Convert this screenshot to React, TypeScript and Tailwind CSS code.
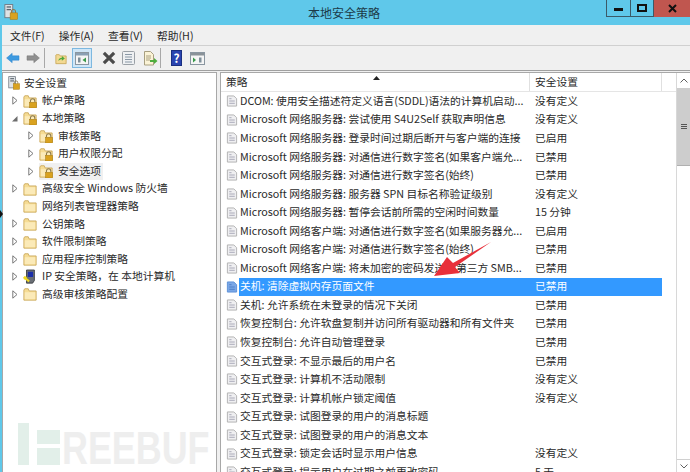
import React from "react";

const font = { fontFamily: '"Noto Sans CJK SC", "Noto Sans", sans-serif' };

const Folder = ({ lock = false }: { lock?: boolean }) => (
  <svg width="14" height="14" viewBox="0 0 16 16" className="shrink-0">
    <path d="M1 3.5 V15 H15 V4.5 H7 L6 2 H2 Z" fill="#f6dc94" stroke="#c9a85a" />
    <rect x="2" y="6" width="12" height="8" fill="#fbeab8" />
    {lock && (
      <g>
        <path d="M8.5 9.5 V8 a2.5 2.5 0 0 1 5 0 V9.5" fill="none" stroke="#8a7a50" strokeWidth="1.2" />
        <rect x="7.5" y="9.5" width="8" height="6.5" fill="#d9a21f" stroke="#a67a12" strokeWidth="0.6" />
      </g>
    )}
  </svg>
);

const ServerLock = ({ w = 12, h = 14 }: { w?: number; h?: number }) => (
  <svg width={w} height={h} viewBox="0 0 16 18" className="shrink-0">
    <rect x="1" y="0.5" width="9" height="15" fill="#dfe3e6" stroke="#6f7780" />
    <rect x="3" y="2.5" width="5" height="1.5" fill="#5c6670" />
    <rect x="3" y="5.5" width="5" height="1.5" fill="#5c6670" />
    <path d="M8.5 10 V8.5 a2.3 2.3 0 0 1 4.6 0 V10" fill="none" stroke="#8a7a50" strokeWidth="1.2" />
    <rect x="7" y="10" width="8.5" height="7.5" fill="#d9a21f" stroke="#a67a12" strokeWidth="0.6" />
  </svg>
);

const IpIcon = () => (
  <svg width="14" height="16" viewBox="0 0 16 18" className="shrink-0">
    <path d="M4 1 H13 V13 L11 16 H4 Z" fill="#6a6f76" stroke="#3a3d42" />
    <rect x="5.5" y="3" width="6" height="6" fill="#1c2fa8" />
    <path d="M1 9 L7 14" stroke="#f0d820" strokeWidth="2.4" />
    <circle cx="2.5" cy="10" r="2" fill="#f0d820" />
  </svg>
);

const Caret = ({ open = false, hidden = false }: { open?: boolean; hidden?: boolean }) => (
  <span className="flex w-[9px] shrink-0 items-center justify-center">
    {hidden ? null : open ? (
      <svg width="7" height="7" viewBox="0 0 7 7"><path d="M6.5 1 V6.5 H1 Z" fill="#6d6d6d" /></svg>
    ) : (
      <svg width="6" height="9" viewBox="0 0 6 9"><path d="M0.8 0.8 L5 4.5 L0.8 8.2 Z" fill="#fff" stroke="#7a7a7a" /></svg>
    )}
  </span>
);

type T = { t: string; d: number; k: "f" | "l" | "s" | "i"; c?: "o" | "n"; sel?: boolean };
const tree: T[] = [
  { t: "帐户策略", d: 1, k: "l" },
  { t: "本地策略", d: 1, k: "l", c: "o" },
  { t: "审核策略", d: 2, k: "l" },
  { t: "用户权限分配", d: 2, k: "l" },
  { t: "安全选项", d: 2, k: "l", sel: true },
  { t: "高级安全 Windows 防火墙", d: 1, k: "f" },
  { t: "网络列表管理器策略", d: 1, k: "f", c: "n" },
  { t: "公钥策略", d: 1, k: "f" },
  { t: "软件限制策略", d: 1, k: "f" },
  { t: "应用程序控制策略", d: 1, k: "f" },
  { t: "IP 安全策略，在 本地计算机", d: 1, k: "i" },
  { t: "高级审核策略配置", d: 1, k: "f" },
];

const rows: [string, string][] = [
  ["DCOM: 使用安全描述符定义语言(SDDL)语法的计算机启动...", "没有定义"],
  ["Microsoft 网络服务器: 尝试使用 S4U2Self 获取声明信息", "没有定义"],
  ["Microsoft 网络服务器: 登录时间过期后断开与客户端的连接", "已启用"],
  ["Microsoft 网络服务器: 对通信进行数字签名(如果客户端允...", "已禁用"],
  ["Microsoft 网络服务器: 对通信进行数字签名(始终)", "已禁用"],
  ["Microsoft 网络服务器: 服务器 SPN 目标名称验证级别", "没有定义"],
  ["Microsoft 网络服务器: 暂停会话前所需的空闲时间数量", "15 分钟"],
  ["Microsoft 网络客户端: 对通信进行数字签名(如果服务器允...", "已启用"],
  ["Microsoft 网络客户端: 对通信进行数字签名(始终)", "已禁用"],
  ["Microsoft 网络客户端: 将未加密的密码发送到第三方 SMB...", "已禁用"],
  ["关机: 清除虚拟内存页面文件", "已禁用"],
  ["关机: 允许系统在未登录的情况下关闭", "已禁用"],
  ["恢复控制台: 允许软盘复制并访问所有驱动器和所有文件夹", "已禁用"],
  ["恢复控制台: 允许自动管理登录", "已禁用"],
  ["交互式登录: 不显示最后的用户名", "已禁用"],
  ["交互式登录: 计算机不活动限制", "没有定义"],
  ["交互式登录: 计算机帐户锁定阈值", "没有定义"],
  ["交互式登录: 试图登录的用户的消息标题", ""],
  ["交互式登录: 试图登录的用户的消息文本", ""],
  ["交互式登录: 锁定会话时显示用户信息", "没有定义"],
  ["交互式登录: 提示用户在过期之前更改密码", "5 天"],
];

const PolicyIcon = ({ sel }: { sel: boolean }) => (
  <svg width="12" height="14" viewBox="0 0 13 14" className="shrink-0">
    <path d="M1.5 1.5 H8.5 L11.5 4.5 V12.5 H1.5 Z" fill={sel ? "#7aa7e6" : "#efeff1"} stroke={sel ? "#5b8fd8" : "#b0b0b0"} />
    <path d="M3.5 4.5 H6 M3.5 7 H9.5 M3.5 9.5 H9.5" stroke={sel ? "#4a7cc6" : "#a5a5b5"} />
  </svg>
);

function Toolbar() {
  return (
    <div className="flex h-[24px] shrink-0 items-center bg-[#f0f0f0] pl-[4px]">
      <svg width="14" height="12" viewBox="0 0 16 14"><path d="M0.5 7 L7 1.5 V4.5 H15 V9.5 H7 V12.5 Z" fill="#3d9ae0" stroke="#2f86cc" strokeWidth="0.6" /></svg>
      <svg width="14" height="12" viewBox="0 0 16 14" className="ml-[6px]"><path d="M15.5 7 L9 1.5 V4.5 H1 V9.5 H9 V12.5 Z" fill="#8f8f8f" stroke="#777" strokeWidth="0.6" /></svg>
      <div className="ml-[4px] h-[20px] w-px bg-[#a8a8a8]" />
      <svg width="12" height="13" viewBox="0 0 14 14" className="ml-[10px]"><path d="M1 3 V13 H13 V4 H6 L5 2.5 H1.5 Z" fill="#f3d992" stroke="#c9a85a" /><path d="M4 10 C4 7 6 6 8 6 V4 L11.5 7 L8 9.5 V8 C6.5 8 5 8.5 4 10 Z" fill="#4fa83d" /></svg>
      <div className="ml-[5px] flex h-[20px] w-[20px] items-center justify-center border border-[#7db8e0] bg-[#cfe6f7]">
        <svg width="14" height="13" viewBox="0 0 14 13"><rect x="0.5" y="0.5" width="13" height="12" fill="#f5f5f5" stroke="#8a96a0" /><rect x="1" y="1" width="12" height="2.5" fill="#8aa0b4" /><rect x="3" y="5.5" width="2.5" height="5" fill="#7f8f9a" /><path d="M11 5.5 V10.5 L7.5 8 Z" fill="#3a9a4a" /></svg>
      </div>
      <svg width="14" height="14" viewBox="0 0 15 14" className="ml-[10px]"><path d="M2 1.5 L13 12.5 M13 1.5 L2 12.5" stroke="#4b4b4b" strokeWidth="3.4" /></svg>
      <svg width="13" height="14" viewBox="0 0 13 14" className="ml-[6px]"><rect x="0.5" y="0.5" width="12" height="13" rx="1" fill="#eef0f2" stroke="#9aa0a6" /><path d="M3 3.5 H10 M3 6 H10 M3 8.5 H10 M3 11 H10" stroke="#8a98a6" /></svg>
      <svg width="15" height="15" viewBox="0 0 15 15" className="ml-[8px]"><path d="M1.5 0.5 H7.5 L10.5 3.5 V14 H1.5 Z" fill="#fbf3d6" stroke="#a89f80" /><path d="M3 5 H8 M3 7 H8 M3 9 H7" stroke="#a89f80" /><path d="M7 9 H11 V7 L14.5 10 L11 13 V11 H7 Z" fill="#4fae3f" /></svg>
      <div className="ml-[2px] h-[20px] w-px bg-[#a8a8a8]" />
      <div className="ml-[10px] flex h-[16px] w-[11px] items-center justify-center border border-[#1a2f80] bg-[#2a44b0] text-[12px] leading-none font-bold text-white">?</div>
      <svg width="15" height="13" viewBox="0 0 15 13" className="ml-[8px]"><rect x="0.5" y="0.5" width="14" height="12" fill="#f5f5f5" stroke="#8a96a0" /><rect x="1" y="1" width="13" height="2.5" fill="#8a9298" /><path d="M3 5.5 V10.5 L6 8 Z" fill="#3a9a4a" /><rect x="9" y="5.5" width="2.5" height="5" fill="#7f8f9a" /></svg>
    </div>
  );
}

export default function App() {
  return (
    <div className="relative flex h-[472px] w-[690px] flex-col overflow-hidden bg-[#5fc8ea] text-[10.75px] leading-none text-[#2a2a2a]" style={font}>
      <div className="relative flex h-[25px] shrink-0 items-center justify-center text-[12px] text-[#1c3a48]">
        <span className="absolute left-[4px] top-[4px]"><ServerLock w={14} h={16} /></span>
        <span className="pr-[2px]">本地安全策略</span>
        <div className="absolute right-0 top-0 flex h-[17px]">
          <div className="flex w-[25px] items-center justify-center border-x border-b border-[#3b5a68]"><div className="mt-[3px] h-[3px] w-[9px] bg-[#111]" /></div>
          <div className="flex w-[23px] items-center justify-center border-r border-b border-[#3b5a68]"><div className="h-[8px] w-[10px] border-2 border-[#111]" /></div>
          <div className="flex w-[36px] items-center justify-center bg-[#c0564f]">
            <svg width="9" height="9" viewBox="0 0 9 9"><path d="M1 1 L8 8 M8 1 L1 8" stroke="#111" strokeWidth="2" /></svg>
          </div>
        </div>
      </div>

      <div className="ml-[2px] flex min-h-0 flex-1 flex-col bg-[#f0f0f0]">
        <div className="flex h-[21px] shrink-0 items-center gap-[14px] border-b border-[#d0d0d0] pl-[8px] pt-[2px] text-[#2a2a2a]">
          <span>文件(F)</span><span>操作(A)</span><span>查看(V)</span><span>帮助(H)</span>
        </div>
        <Toolbar />
        <div className="flex min-h-0 flex-1 gap-[3px] border-t border-[#a0a0a0] pt-px">
          {/* tree */}
          <div className="flex h-full w-[215px] shrink-0 flex-col border border-b-0 border-[#a8a8a8] bg-white pl-[5px] pt-[1px]">
            <div className="flex h-[18px] items-center gap-[4px]"><ServerLock /><span>安全设置</span></div>
            {tree.map((n) => (
              <div key={n.t} className={`flex h-[17.6px] items-center ${n.d === 1 ? "pl-[2px]" : "pl-[18px]"}`}>
                <Caret open={n.c === "o"} hidden={n.c === "n"} />
                <div className={`ml-[4px] flex h-[17px] items-center gap-[5px] pr-[2px] ${n.sel ? "bg-[#f0f0f0]" : ""}`}>
                  {n.k === "i" ? <IpIcon /> : <Folder lock={n.k === "l"} />}
                  <span className="whitespace-pre">{n.t}</span>
                </div>
              </div>
            ))}
          </div>
          {/* list */}
          <div className="flex h-full min-w-0 flex-1 border border-r-0 border-b-0 border-[#a8a8a8] bg-white">
            <div className="flex min-w-0 flex-1 flex-col overflow-hidden">
              <div className="relative flex h-[19px] shrink-0 items-center border-b border-[#e5e5e5]">
                <div className="flex h-full w-[309px] items-center border-r border-[#e0e0e0] pl-[5px] pt-px">策略</div>
                <div className="flex h-full w-[132px] items-center border-r border-[#e0e0e0] pl-[5px] pt-px">安全设置</div>
                <svg width="7" height="4" viewBox="0 0 7 4" className="absolute left-[152px] top-[3px]"><path d="M3.5 0 L7 4 H0 Z" fill="#222" /></svg>
              </div>
              <div className="flex flex-col pl-[5px]">
                {rows.map(([a, b]) => {
                  const sel = a.startsWith("关机: 清除");
                  return (
                    <div key={a} className="flex h-[18.55px] shrink-0 items-center">
                      <PolicyIcon sel={sel} />
                      <div className={`ml-[1px] flex h-[18px] w-[423px] shrink-0 items-center ${sel ? "bg-[#3399ff] text-white" : ""}`}>
                        <span className="w-[296px] shrink-0 whitespace-nowrap pl-[1px]">{a}</span>
                        <span className="whitespace-nowrap">{b}</span>
                      </div>
                    </div>
                  );
                })}
              </div>
            </div>
            {/* scrollbar */}
            <div className="flex h-full w-[14px] shrink-0 flex-col border-l border-[#d8d8d8] bg-white">
              <div className="flex h-[15px] items-center justify-center">
                <svg width="8" height="5" viewBox="0 0 8 5"><path d="M0.5 4.5 L4 1 L7.5 4.5" fill="none" stroke="#606060" /></svg>
              </div>
              <div className="flex h-[78px] flex-col items-center justify-center gap-px border-b border-[#b0b0b0] bg-[#cdcdcd]">
                <div className="h-px w-[6px] bg-[#555]" /><div className="h-px w-[6px] bg-[#555]" /><div className="h-px w-[6px] bg-[#555]" />
              </div>
              <div className="flex-1" />
              <div className="flex h-[13px] items-center justify-center border-t border-[#d0d0d0]">
                <svg width="8" height="5" viewBox="0 0 8 5"><path d="M0.5 0.5 L4 4 L7.5 0.5" fill="none" stroke="#606060" /></svg>
              </div>
            </div>
          </div>
        </div>
      </div>

      {/* black pointer tick at left edge */}
      <svg width="3" height="8" viewBox="0 0 3 8" className="absolute left-0 top-[210px]"><path d="M0 0 L3 4 L0 8 Z" fill="#111" /></svg>

      {/* annotation arrow */}
      <svg width="690" height="472" viewBox="0 0 690 472" className="pointer-events-none absolute left-0 top-0">
        <path d="M491 242 L453 263 L447 257 L434 276 L460 273 L455 267 Z" fill="#e8303a" />
      </svg>

      {/* watermark */}
      <div className="pointer-events-none absolute left-[18px] top-[423px] flex h-[42px] items-end">
        <div className="h-[42px] w-[11px] bg-[#e2efe9]" />
        <div className="ml-[8px] flex h-[35px] w-[23px] flex-col justify-between">
          <div className="h-[14px] bg-[#e2efe9]" />
          <div className="h-[17px] bg-[#e2efe9]" />
        </div>
        <span className="ml-[2px] origin-left scale-x-[0.78] text-[46px] leading-[33px] font-bold text-[#eeeeee]" style={{ fontFamily: '"Liberation Sans", sans-serif' }}>REEBUF</span>
      </div>
    </div>
  );
}
